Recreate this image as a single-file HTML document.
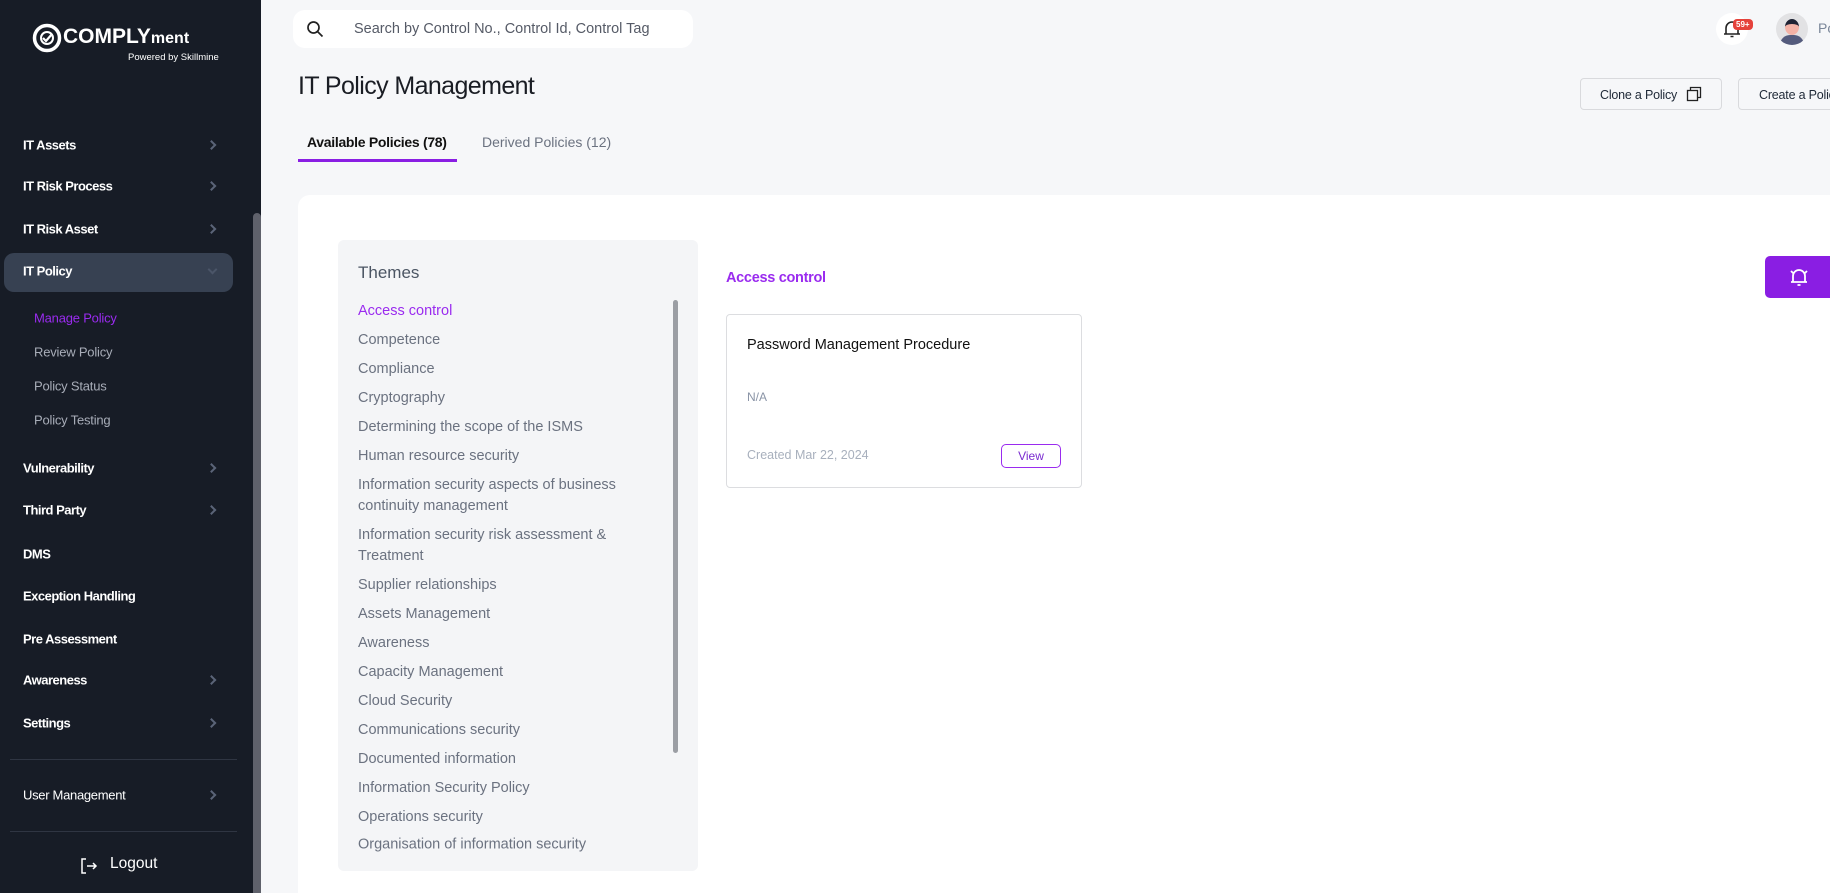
<!DOCTYPE html>
<html><head><meta charset="utf-8"><style>
*{box-sizing:border-box;margin:0;padding:0}
html{width:1830px;height:893px;overflow:hidden}
body{width:1830px;height:893px;overflow:hidden;background:#f6f7f9;font-family:"Liberation Sans",sans-serif;position:relative}
.sb{position:absolute;left:0;top:0;width:261px;height:893px;background:#171c26}
.sbs{position:absolute;left:253px;top:213px;width:8px;height:680px;background:#5f616b;border-radius:4px 4px 0 0}
.abs{position:absolute}
.nav{position:absolute;left:23px;color:#fff;font-size:13px;font-weight:bold;letter-spacing:-0.5px;transform:translateY(-50%)}
.sub{position:absolute;left:34px;color:#a8adb8;font-size:13px;letter-spacing:-0.2px;transform:translateY(-50%)}
.chev{position:absolute;left:208px;width:7px;height:7px;border-right:2px solid #5b6478;border-top:2px solid #5b6478;transform:translateY(-50%) rotate(45deg)}
.div{position:absolute;left:10px;width:227px;height:1px;background:#2f3542}
.theme{position:absolute;left:358px;font-size:14.5px;color:#6b7280;transform:translateY(-50%);white-space:nowrap}
</style></head><body>
<div class="sb">
  <svg class="abs" style="left:32px;top:23px" width="30" height="30" viewBox="0 0 30 30"><circle cx="15" cy="15" r="12.5" fill="none" stroke="#fff" stroke-width="3.5"/><circle cx="15" cy="15" r="6" fill="none" stroke="#fff" stroke-width="2"/><path d="M11 15l3 3 6-7" fill="none" stroke="#fff" stroke-width="2.2"/></svg>
  <div class="abs" style="left:63px;top:25px;color:#fff;font-size:21px;font-weight:bold;letter-spacing:0px">COMPLY<span style="font-size:16px">ment</span></div>
  <div class="abs" style="left:128px;top:52px;color:#fff;font-size:9.5px">Powered by Skillmine</div>
  <div class="nav" style="top:145px">IT Assets</div><div class="chev" style="top:145px"></div>
  <div class="nav" style="top:186px">IT Risk Process</div><div class="chev" style="top:186px"></div>
  <div class="nav" style="top:229px">IT Risk Asset</div><div class="chev" style="top:229px"></div>
  <div class="abs" style="left:4px;top:253px;width:229px;height:39px;background:#374152;border-radius:10px"></div>
  <div class="nav" style="top:271px">IT Policy</div>
  <div class="abs" style="left:209px;top:266px;width:7px;height:7px;border-right:2px solid #4b5568;border-bottom:2px solid #4b5568;transform:rotate(45deg)"></div>
  <div class="sub" style="top:318px;color:#9a2bef">Manage Policy</div>
  <div class="sub" style="top:352px">Review Policy</div>
  <div class="sub" style="top:386px">Policy Status</div>
  <div class="sub" style="top:420px">Policy Testing</div>
  <div class="nav" style="top:468px">Vulnerability</div><div class="chev" style="top:468px"></div>
  <div class="nav" style="top:510px">Third Party</div><div class="chev" style="top:510px"></div>
  <div class="nav" style="top:554px">DMS</div>
  <div class="nav" style="top:596px">Exception Handling</div>
  <div class="nav" style="top:639px">Pre Assessment</div>
  <div class="nav" style="top:680px">Awareness</div><div class="chev" style="top:680px"></div>
  <div class="nav" style="top:723px">Settings</div><div class="chev" style="top:723px"></div>
  <div class="div" style="top:759px"></div>
  <div class="nav" style="top:795px;font-weight:normal;letter-spacing:-0.3px">User Management</div><div class="chev" style="top:795px"></div>
  <div class="div" style="top:831px"></div>
  <svg class="abs" style="left:80px;top:857px" width="18" height="18" viewBox="0 0 18 18"><path d="M6 2H2v14h4M7 9h9M13 6l3 3-3 3" fill="none" stroke="#fff" stroke-width="1.5"/></svg>
  <div class="abs" style="left:110px;top:855px;color:#fff;font-size:15.5px">Logout</div>
  <div class="sbs"></div>
</div>
<div class="abs" style="left:293px;top:10px;width:400px;height:38px;background:#fff;border-radius:12px"></div>
<svg class="abs" style="left:306px;top:20px" width="18" height="18" viewBox="0 0 18 18"><circle cx="7.5" cy="7.5" r="5.5" fill="none" stroke="#222" stroke-width="1.7"/><path d="M11.5 11.5l5 5" stroke="#222" stroke-width="1.7"/></svg>
<div class="abs" style="left:354px;top:21px;font-size:14.5px;color:#555a66">Search by Control No., Control Id, Control Tag</div>
<div class="abs" style="left:1716px;top:13px;width:32px;height:32px;border-radius:50%;background:#fff"></div>
<svg class="abs" style="left:1722px;top:19px" width="20" height="20" viewBox="0 0 20 20"><path d="M4 15V9a6 6 0 0112 0v6h2M2 15h16M8.5 17.5h3" fill="none" stroke="#222" stroke-width="1.6"/></svg>
<div class="abs" style="left:1733px;top:19px;background:#e5423b;color:#fff;font-size:8px;font-weight:bold;border-radius:4px;padding:1px 3px">59+</div>
<div class="abs" style="left:1776px;top:13px;width:32px;height:32px;border-radius:50%;background:#e2e2e4;overflow:hidden"><div style="position:absolute;left:9px;top:6px;width:14px;height:16px;border-radius:50%;background:#f3b2a6;border-top:5px solid #1e2233"></div><div style="position:absolute;left:4px;top:22px;width:24px;height:14px;border-radius:10px 10px 0 0;background:#545b7d"></div></div>
<div class="abs" style="left:1818px;top:20px;font-size:14px;color:#7a8699">Po</div>
<div class="abs" style="left:298px;top:72px;font-size:25px;color:#1a1d24;letter-spacing:-0.6px">IT Policy Management</div>
<div class="abs" style="left:1580px;top:78px;width:142px;height:32px;border:1px solid #d9dadd;border-radius:4px;font-size:12.5px;color:#1f2937;padding:9px 0 0 19px;letter-spacing:-0.2px">Clone a Policy</div>
<svg class="abs" style="left:1686px;top:86px" width="16" height="16" viewBox="0 0 16 16"><rect x="1.5" y="4.5" width="10" height="10" fill="none" stroke="#222" stroke-width="1.3"/><path d="M4.5 4.5V1.5h10v10h-3" fill="none" stroke="#222" stroke-width="1.3"/></svg>
<div class="abs" style="left:1738px;top:78px;width:120px;height:32px;border:1px solid #d9dadd;border-radius:4px;font-size:12.5px;color:#1f2937;padding:9px 0 0 20px;white-space:nowrap;letter-spacing:-0.2px">Create a Policy</div>
<div class="abs" style="left:307px;top:134px;font-size:14px;font-weight:bold;color:#111;letter-spacing:-0.3px">Available Policies (78)</div>
<div class="abs" style="left:298px;top:159px;width:159px;height:3px;background:#8a1ee3"></div>
<div class="abs" style="left:482px;top:134px;font-size:14px;color:#6b7280">Derived Policies (12)</div>
<div class="abs" style="left:298px;top:195px;width:1540px;height:698px;background:#fff;border-radius:12px 0 0 0"></div>
<div class="abs" style="left:338px;top:240px;width:360px;height:631px;background:#f4f5f7;border-radius:6px"></div>
<div class="abs" style="left:358px;top:263px;font-size:17px;color:#4b5563">Themes</div>
<div class="abs" style="left:673px;top:300px;width:5px;height:453px;background:#9b9ea4;border-radius:3px"></div>
<div class="theme" style="top:311px;color:#9a2bef">Access control</div>
<div class="theme" style="top:340px">Competence</div>
<div class="theme" style="top:369px">Compliance</div>
<div class="theme" style="top:398px">Cryptography</div>
<div class="theme" style="top:427px">Determining the scope of the ISMS</div>
<div class="theme" style="top:456px">Human resource security</div>
<div class="theme" style="top:485px">Information security aspects of business</div>
<div class="theme" style="top:506px">continuity management</div>
<div class="theme" style="top:535px">Information security risk assessment &amp;</div>
<div class="theme" style="top:556px">Treatment</div>
<div class="theme" style="top:585px">Supplier relationships</div>
<div class="theme" style="top:614px">Assets Management</div>
<div class="theme" style="top:643px">Awareness</div>
<div class="theme" style="top:672px">Capacity Management</div>
<div class="theme" style="top:701px">Cloud Security</div>
<div class="theme" style="top:730px">Communications security</div>
<div class="theme" style="top:759px">Documented information</div>
<div class="theme" style="top:788px">Information Security Policy</div>
<div class="theme" style="top:817px">Operations security</div>
<div class="theme" style="top:846px;height:16px;overflow:hidden;transform:translateY(-60%)">Organisation of information security</div>
<div class="abs" style="left:726px;top:270px;font-size:14.5px;font-weight:bold;color:#9a2bef;letter-spacing:-0.3px">Access control</div>
<div class="abs" style="left:726px;top:314px;width:356px;height:174px;border:1px solid #dcdde0;border-radius:4px"></div>
<div class="abs" style="left:747px;top:337px;font-size:14.5px;color:#111">Password Management Procedure</div>
<div class="abs" style="left:747px;top:390px;font-size:12px;color:#8a94a6">N/A</div>
<div class="abs" style="left:747px;top:448px;font-size:12.5px;color:#a8b0bd">Created Mar 22, 2024</div>
<div class="abs" style="left:1001px;top:444px;width:60px;height:24px;border:1px solid #9a2bef;border-radius:5px;font-size:12px;color:#7a2bd0;text-align:center;line-height:22px">View</div>
<div class="abs" style="left:1765px;top:256px;width:70px;height:42px;background:#8a1ee3;border-radius:5px"></div>
<svg class="abs" style="left:1787px;top:265px" width="24" height="24" viewBox="0 0 24 24"><path d="M6 17v-6a6 6 0 0112 0v6M4 17h16M10.5 20h3M4 6l2 2M20 6l-2 2" fill="none" stroke="#fff" stroke-width="1.8"/></svg>
</body></html>
